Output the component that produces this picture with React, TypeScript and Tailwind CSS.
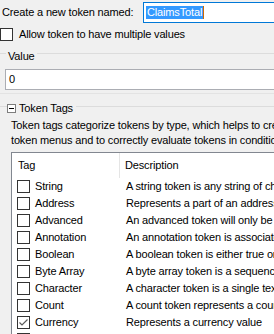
import React from "react";

const rows: { tag: string; desc: string; checked?: boolean }[] = [
  { tag: "String", desc: "A string token is any string of characters" },
  { tag: "Address", desc: "Represents a part of an address" },
  { tag: "Advanced", desc: "An advanced token will only be shown" },
  { tag: "Annotation", desc: "An annotation token is associated" },
  { tag: "Boolean", desc: "A boolean token is either true or false" },
  { tag: "Byte Array", desc: "A byte array token is a sequence" },
  { tag: "Character", desc: "A character token is a single text" },
  { tag: "Count", desc: "A count token represents a count" },
  { tag: "Currency", desc: "Represents a currency value", checked: true },
  { tag: "Date", desc: "A date token represents a date" },
];

function Check({ checked }: { checked?: boolean }) {
  return (
    <div className="w-[13px] h-[13px] shrink-0 border border-[#333333] bg-white flex items-center justify-center">
      {checked && (
        <svg width="11" height="11" viewBox="0 0 11 11">
          <path d="M1.5 5.5 L4 8 L9.5 2.5" fill="none" stroke="#5a5a5a" strokeWidth="1.2" />
        </svg>
      )}
    </div>
  );
}

export default function App() {
  return (
    <div
      className="w-[274px] h-[334px] bg-[#f0f0f0] overflow-hidden text-[11px] text-black leading-none tracking-[-0.15px]"
      style={{ fontFamily: '"Liberation Sans", Arial, sans-serif' }}
    >
      {/* Row 1 */}
      <div className="flex items-center h-[21px] mt-[2px]">
        <div className="w-[143px] shrink-0 pl-[2px] whitespace-nowrap">Create a new token named:</div>
        <div className="h-[21px] w-[200px] shrink-0 border border-[#0078d7] bg-white flex items-center pl-[2px]">
          <span className="bg-[#3399ff] text-white px-[1px] h-[13px] flex items-center">ClaimsTotal</span>
          <span className="w-[1px] h-[13px] bg-[#cc6a00]" />
        </div>
      </div>
      {/* Row 2 */}
      <div className="flex items-center h-[13px] mt-[5px]">
        <Check />
        <span className="ml-[6px] whitespace-nowrap">Allow token to have multiple values</span>
      </div>
      {/* Value group header */}
      <div className="flex h-[14px] mt-[8px]">
        <div className="w-[6px] shrink-0 h-[1px] bg-[#dcdcdc] mt-[4px]" />
        <span className="px-[2px] self-center">Value</span>
        <div className="flex-1 h-[1px] bg-[#dcdcdc] mt-[4px]" />
      </div>
      {/* Value input */}
      <div className="ml-[5px] mt-[6px] h-[21px] w-[300px] border border-[#abadb3] bg-white flex items-center pl-[3px]">
        0
      </div>
      <div className="h-[1px] mt-[3px] bg-[#e3e3e3]" />
      {/* Token Tags header */}
      <div className="flex h-[12px] mt-[8px]">
        <div className="w-[7px] shrink-0 h-[1px] bg-[#dcdcdc] mt-[4px]" />
        <div className="w-[9px] h-[9px] border border-[#7d7d7d] bg-white flex items-center justify-center self-center shrink-0">
          <div className="w-[5px] h-[1px] bg-black" />
        </div>
        <span className="pl-[3px] pr-[3px] self-center">Token Tags</span>
        <div className="flex-1 h-[1px] bg-[#dcdcdc] mt-[4px]" />
      </div>
      {/* Description */}
      <div className="ml-[11px] mt-[4px] leading-[15px] whitespace-nowrap">
        <div>Token tags categorize tokens by type, which helps to create</div>
        <div>token menus and to correctly evaluate tokens in conditions</div>
      </div>
      {/* List */}
      <div className="ml-[11px] mt-[4px] w-[320px] border border-[#828790] bg-white">
        <div className="flex h-[25px] items-center">
          <div className="w-[108px] shrink-0 pl-[6px] h-full flex items-center border-r border-[#e5e5e5]">Tag</div>
          <div className="pl-[5px] whitespace-nowrap">Description</div>
        </div>
        {rows.map((r) => (
          <div key={r.tag} className="flex h-[17px] items-center">
            <div className="w-[108px] shrink-0 flex items-center pl-[5px]">
              <Check checked={r.checked} />
              <span className="ml-[5px] whitespace-nowrap">{r.tag}</span>
            </div>
            <div className="pl-[6px] whitespace-nowrap">{r.desc}</div>
          </div>
        ))}
      </div>
    </div>
  );
}
